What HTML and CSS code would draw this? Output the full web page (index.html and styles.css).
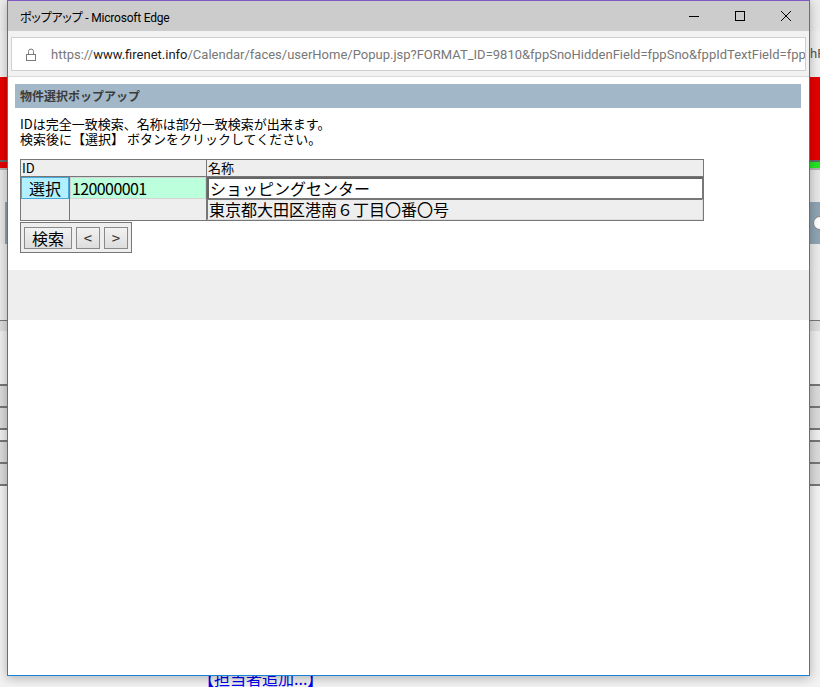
FILE: index.html
```html
<!DOCTYPE html>
<html lang="ja">
<head>
<meta charset="utf-8">
<title>ポップアップ - Microsoft Edge</title>
<link rel="stylesheet" href="styles.css">
</head>
<body>
<div class="backdrop">
  <div class="bg-title"></div>
  <div class="bg-address">hF</div>
  <div class="bg-red"></div>
  <div class="bg-line-dark"></div>
  <div class="bg-green"></div>
  <div class="bg-line"></div>
  <div class="bg-light"></div>
  <div class="bg-nav"><span class="bg-knob"></span></div>
  <div class="bg-gray"></div>
  <div class="bg-rule"></div>
  <div class="bg-pale"></div>
  <div class="bg-plain"></div>
  <div class="bg-row"></div>
  <div class="bg-row"></div>
  <div class="bg-row bg-row-light"></div>
  <div class="bg-row"></div>
  <div class="bg-row"></div>
  <div class="bg-rest"><span class="bg-link">【担当者追加...】</span></div>
</div>

<div class="popup">
  <div class="titlebar">
    <span class="title">ポップアップ - Microsoft Edge</span>
    <div class="controls">
      <span class="ctl"><svg width="10" height="10" viewBox="0 0 10 10"><path d="M0 5.5H10" stroke="#000" stroke-width="1"/></svg></span>
      <span class="ctl"><svg width="10" height="10" viewBox="0 0 10 10"><rect x="0.5" y="0.5" width="9" height="9" fill="none" stroke="#000" stroke-width="1"/></svg></span>
      <span class="ctl"><svg width="10" height="10" viewBox="0 0 10 10"><path d="M0 0L10 10M10 0L0 10" stroke="#000" stroke-width="1"/></svg></span>
    </div>
  </div>
  <div class="addressbar">
    <div class="urlbox">
      <svg class="lock" width="10" height="13" viewBox="0 0 10 13"><path d="M2.5 6V3.5a2.5 2.5 0 0 1 5 0V6" fill="none" stroke="#7a7a7a" stroke-width="1"/><rect x="0.5" y="6.5" width="9" height="6" fill="none" stroke="#7a7a7a" stroke-width="1"/></svg>
      <span class="url">https://<span class="host">www.firenet.info</span>/Calendar/faces/userHome/Popup.jsp?FORMAT_ID=9810&amp;fppSnoHiddenField=fppSno&amp;fppIdTextField=fpp</span>
    </div>
  </div>
  <div class="page">
    <div class="page-inner">
      <div class="page-head">物件選択ポップアップ</div>
      <p class="note"><span class="note-line">IDは完全一致検索、名称は部分一致検索が出来ます。</span><span class="note-line">検索後に【選択】 ボタンをクリックしてください。</span></p>
      <div class="grid">
        <div class="gh gh-id">ID</div>
        <div class="gh">名称</div>
        <div class="gc"><span class="btn-select">選択</span></div>
        <div class="gc"><span class="field field-id">120000001</span></div>
        <div class="gc gc-name">
          <span class="field field-name">ショッピングセンター</span>
          <span class="field field-addr">東京都大田区港南６丁目〇番〇号</span>
        </div>
      </div>
      <div class="pager">
        <span class="btn btn-search">検索</span>
        <span class="btn btn-nav">&lt;</span>
        <span class="btn btn-nav">&gt;</span>
      </div>
    </div>
    <div class="band"></div>
  </div>
</div>
</body>
</html>
```
FILE: styles.css
```css
* { box-sizing: border-box; }
html, body { margin: 0; padding: 0; }
body {
  width: 820px;
  height: 687px;
  overflow: hidden;
  position: relative;
  background: #efefef;
  font-family: "Noto Sans CJK JP", sans-serif;
}

/* ---------- background page (behind the popup) ---------- */
.backdrop {
  display: flex;
  flex-direction: column;
  width: 820px;
  height: 687px;
}
.bg-title { height: 31px; background: #ececec; }
.bg-address {
  height: 46px;
  background: #f0f0f0;
  padding-left: 810px;
  font: 13px Roboto, sans-serif;
  line-height: 46px;
  color: #555;
  white-space: nowrap;
}
.bg-red { height: 83px; background: #e60000; }
.bg-line-dark { height: 2px; background: #666; }
.bg-green { height: 6px; background: linear-gradient(to right, #e60000 7px, #22e622 7px); }
.bg-line { height: 2px; background: #b0b0b0; }
.bg-light { height: 32px; background: #e6e6e6; }
.bg-nav {
  height: 42px;
  background: linear-gradient(to right, #e6e6e6 5px, #8fa4b4 5px);
  padding: 14px 0 0 813px;
}
.bg-knob {
  display: block;
  width: 14px;
  height: 14px;
  border-radius: 50%;
  background: #fff;
  border: 1px solid #888;
}
.bg-gray { height: 76px; background: #ebebeb; }
.bg-rule { height: 1px; background: #777; }
.bg-pale { height: 10px; background: #dcdcdc; }
.bg-plain { height: 53px; background: #eeeeee; }
.bg-row { height: 22px; background: #dadada; border-top: 2px solid #777; }
.bg-row-light { height: 12px; background: #eeeeee; }
.bg-rest {
  flex: 1;
  background: #f2f2f2;
  border-top: 2px solid #777;
  display: flex;
  align-items: flex-end;
  padding-left: 198px;
}
.bg-link {
  font-size: 16px;
  line-height: 18px;
  color: #0000ee;
  white-space: nowrap;
}

/* ---------- popup window ---------- */
.popup {
  position: absolute;
  left: 7px;
  top: 0;
  width: 803px;
  height: 676px;
  border: 1px solid #1883d7;
  border-top-color: #7f5bc6;
  background: #fff;
  box-shadow: 0 2px 10px rgba(0, 0, 0, 0.28);
  display: flex;
  flex-direction: column;
}
.titlebar {
  height: 30px;
  flex: none;
  background: #cccccc;
  display: flex;
  align-items: center;
  justify-content: space-between;
}
.title {
  padding-left: 12px;
  font: 12px Roboto, "Noto Sans CJK JP", sans-serif;
  font-feature-settings: "palt";
  letter-spacing: -0.2px;
  color: #000;
}
.controls { display: flex; height: 30px; }
.ctl {
  width: 46px;
  height: 30px;
  display: flex;
  align-items: center;
  justify-content: center;
}
.ctl svg { display: block; }

.addressbar {
  height: 46px;
  flex: none;
  background: #f2f2f2;
  border-bottom: 1px solid #d9d9d9;
  padding: 6px 3px 0 3px;
}
.urlbox {
  height: 34px;
  background: #fff;
  border: 1px solid #d0d0d0;
  display: flex;
  align-items: center;
  padding-left: 14px;
  overflow: hidden;
  white-space: nowrap;
}
.lock { flex: none; margin-right: 15px; }
.url {
  font: 13px Roboto, sans-serif;
  color: #777;
}
.host { color: #1a1a1a; }

/* ---------- page ---------- */
.page { flex: 1; background: #fff; }
.page-inner { padding: 7px 8px 0 7px; }
.page-head {
  height: 24px;
  background: #a2b8c8;
  padding-left: 5px;
  font-size: 12px;
  font-weight: bold;
  line-height: 24px;
  color: #3c3c3c;
}
.note {
  margin: 8px 0 0 5px;
  font-size: 13px;
  line-height: 15px;
  color: #000;
}
.note-line { display: block; height: 15px; white-space: nowrap; }
.grid {
  margin: 13px 0 0 5px;
  width: 684px;
  display: grid;
  grid-template-columns: 48px 136px 496px;
  grid-template-rows: 16px 43px;
  gap: 1px;
  background: #777;
  border: 1px solid #777;
}
.gh {
  background: #eeeeee;
  font-size: 13px;
  line-height: 16px;
  padding-left: 1px;
  color: #000;
}
.gh-id { grid-column: span 2; }
.gc { background: #eeeeee; display: flex; flex-direction: column; }
.btn-select {
  height: 22px;
  background: #b0f0ff;
  border: 1px solid #4aa6d6;
  font-size: 16px;
  line-height: 20px;
  text-align: center;
  color: #000;
}
.field {
  display: block;
  font-size: 16px;
  color: #000;
  white-space: nowrap;
}
.field-id {
  height: 22px;
  background: #bbffdd;
  border: 1px solid #d4d4d4;
  padding-left: 1px;
  line-height: 20px;
  letter-spacing: -0.6px;
}
.field-name {
  height: 22px;
  background: #fff;
  border: 1px solid #777;
  border-top: 2px solid #666;
  border-left: 2px solid #666;
  padding-left: 1px;
  line-height: 19px;
}
.field-addr {
  height: 21px;
  background: #eeeeee;
  border: 1px solid #dddddd;
  border-top-color: #777;
  border-left-color: #777;
  padding-left: 1px;
  line-height: 19px;
}
.pager {
  width: 112px;
  margin: 1px 0 0 5px;
  border: 1px solid #777;
  background: #eeeeee;
  padding: 4px 3px 3px 3px;
  display: flex;
  gap: 4px;
}
.btn {
  height: 22px;
  border: 1px solid #8a8a8a;
  background: linear-gradient(#f2f2f2, #dddddd);
  font-size: 16px;
  line-height: 20px;
  text-align: center;
  color: #000;
}
.btn-search { width: 48px; }
.btn-nav { width: 24px; font-size: 15px; color: #333; }
.band {
  margin-top: 17px;
  height: 50px;
  background: #eeeeee;
}
```
